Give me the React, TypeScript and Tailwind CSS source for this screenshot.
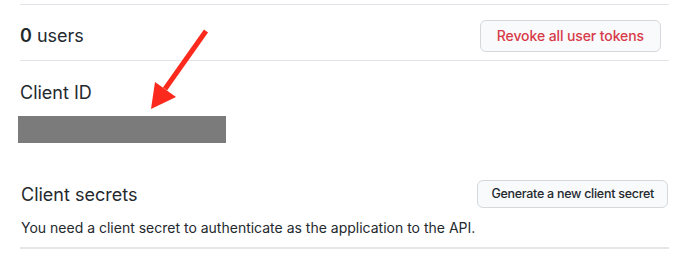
import React from "react";

export default function App() {
  return (
    <div
      className="relative w-[681px] h-[259px] bg-white text-[#24292e] overflow-hidden"
      style={{ fontFamily: "Inter, 'Noto Sans', sans-serif" }}
    >
      <div className="ml-[20px] w-[649px] pt-[4px]">
        <div className="border-t border-[#e1e4e8]" />
        <div className="flex items-center justify-between pt-[15px] pb-[8px] border-b border-[#e1e4e8]">
          <div className="text-[18px] leading-[27px] mt-[-1px]">
            <span className="font-semibold">0</span> users
          </div>
          <button className="mr-[8px] h-[32px] px-[16px] rounded-[6px] border border-[#d5d8dc] bg-[#f9fafb] text-[#d73a49] text-[14px] font-medium leading-[20px] tracking-[-0.1px]">
            Revoke all user tokens
          </button>
        </div>
        <div className="pt-[18px] text-[18px] leading-[27px]">Client ID</div>
        <div className="mt-[10px] ml-[-2px] w-[208px] h-[27px] bg-[#7b7b7b]" />
        <div className="mt-[37px] flex items-center justify-between">
          <div className="text-[18px] leading-[27px] pl-[1px]">Client secrets</div>
          <button className="mr-[1px] h-[28px] px-[13px] rounded-[6px] border border-[#d5d8dc] bg-[#f9fafb] text-[#24292e] text-[12.5px] font-medium leading-[20px] tracking-[-0.28px]">
            Generate a new client secret
          </button>
        </div>
        <div className="mt-[9px] pb-[9px] pl-[1px] text-[14px] leading-[21px] border-b-2 border-[#e4e6e9]">
          You need a client secret to authenticate as the application to the API.
        </div>
      </div>
      <svg
        className="absolute left-0 top-0"
        width="681"
        height="259"
        viewBox="0 0 681 259"
      >
        <line x1="206" y1="31" x2="165" y2="89" stroke="#fb2a1d" strokeWidth="5" strokeLinecap="butt" />
        <polygon points="155,82 176,97 151,109" fill="#fb2a1d" />
      </svg>
    </div>
  );
}
